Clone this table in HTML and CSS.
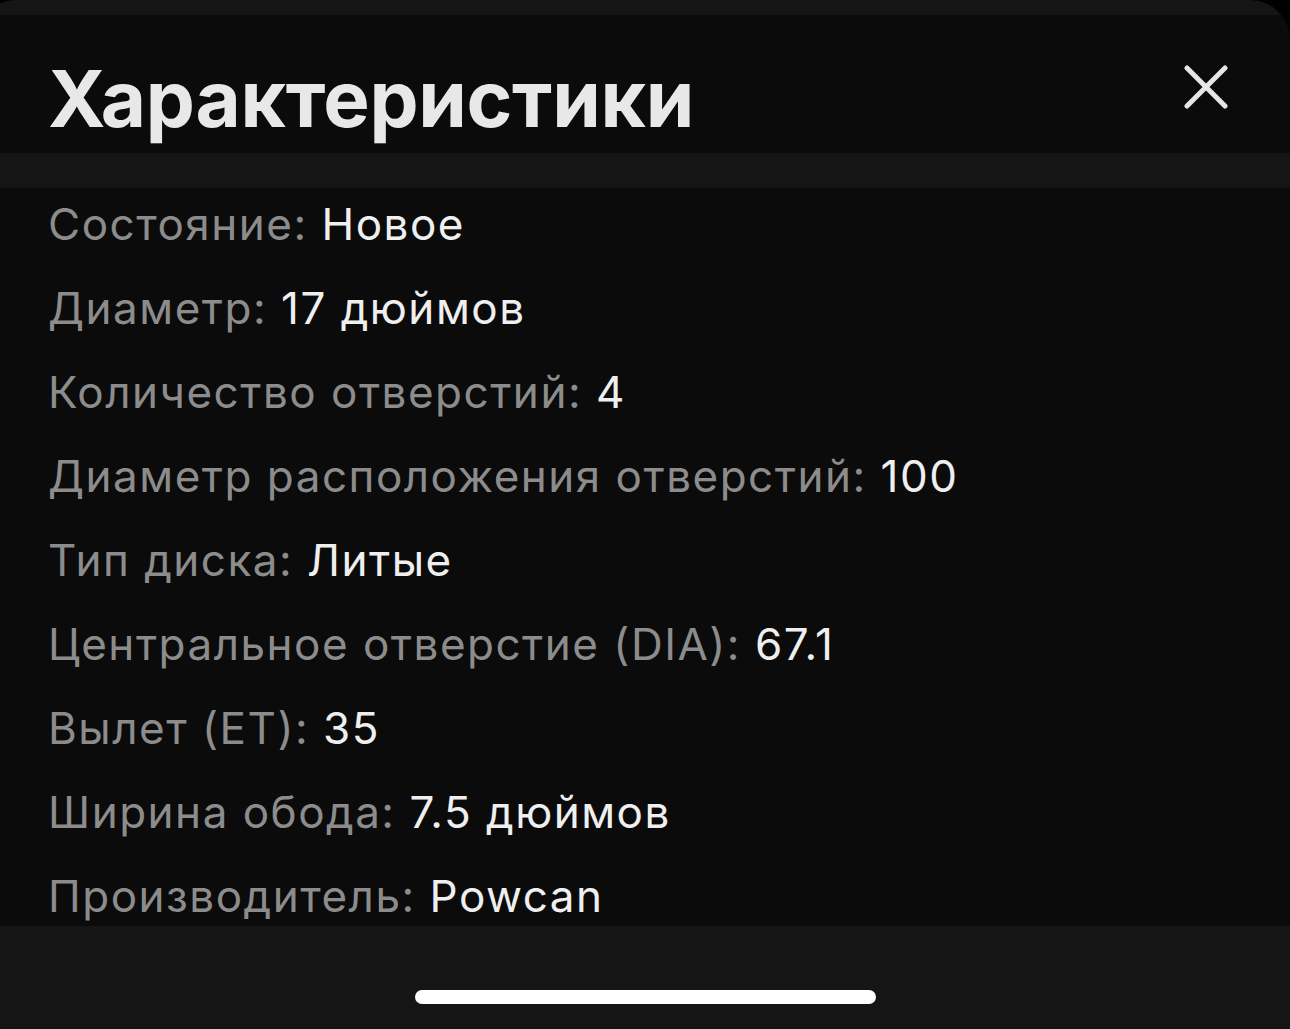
FILE: index.html
```
<!DOCTYPE html>
<html lang="ru">
<head>
<meta charset="utf-8">
<link rel="stylesheet" href="styles.css">
</head>
<body>
<div class="sheet">
  <div class="top-strip"></div>
  <header class="header">
    <h1 class="title">Характеристики</h1>
    <button class="close" aria-label="Закрыть">
      <svg width="44" height="44" viewBox="0 0 44 44"><path d="M3 3 L41 41 M41 3 L3 41" stroke="#e6e6e6" stroke-width="5" stroke-linecap="round" fill="none"/></svg>
    </button>
  </header>
  <div class="divider"></div>
  <div class="content">
    <div class="row"><span class="label">Состояние:</span> <span class="value">Новое</span></div>
    <div class="row"><span class="label">Диаметр:</span> <span class="value">17 дюймов</span></div>
    <div class="row"><span class="label">Количество отверстий:</span> <span class="value">4</span></div>
    <div class="row"><span class="label">Диаметр расположения отверстий:</span> <span class="value">100</span></div>
    <div class="row"><span class="label">Тип диска:</span> <span class="value">Литые</span></div>
    <div class="row"><span class="label">Центральное отверстие (DIA):</span> <span class="value">67.1</span></div>
    <div class="row"><span class="label">Вылет (ET):</span> <span class="value">35</span></div>
    <div class="row"><span class="label">Ширина обода:</span> <span class="value">7.5 дюймов</span></div>
    <div class="row"><span class="label">Производитель:</span> <span class="value">Powcan</span></div>
  </div>
  <div class="bottom">
    <div class="home-indicator"></div>
  </div>
</div>
</body>
</html>
```
FILE: styles.css
```
html, body {
  margin: 0;
  padding: 0;
  background: #000;
  height: 100%;
  overflow: hidden;
}
.sheet {
  width: calc(100% + 24px);
  margin-left: -24px;
  height: 1029px;
  background: #151515;
  border-radius: 40px 40px 0 0;
  display: flex;
  flex-direction: column;
  overflow: hidden;
  font-family: Inter, "Liberation Sans", sans-serif;
}
.top-strip {
  height: 15px;
  flex: none;
}
.header {
  height: 138px;
  flex: none;
  background: #0b0b0b;
  display: flex;
  align-items: flex-start;
  justify-content: space-between;
  padding: 0 62px 0 72px;
  box-sizing: border-box;
}
.title {
  margin: 0;
  font-family: Inter, "Liberation Sans", sans-serif;
  font-weight: 700;
  font-size: 78px;
  line-height: 1;
  color: #e8e8e8;
  padding-top: 45px;
  letter-spacing: -0.3px;
}
.close {
  background: none;
  border: 0;
  padding: 0;
  margin-top: 50px;
  width: 44px;
  height: 44px;
  cursor: pointer;
}
.close svg { display: block; }
.divider {
  height: 35px;
  flex: none;
  background: #151515;
}
.content {
  height: 738px;
  flex: none;
  background: #0b0b0b;
  overflow: hidden;
  padding-left: 72px;
  box-sizing: border-box;
}
.row {
  font-size: 44px;
  line-height: 72px;
  margin-bottom: 12px;
  white-space: nowrap;
  letter-spacing: 1.5px;
}
.label { color: #8c8c8c; }
.value { color: #efefef; }
.bottom {
  flex: 1;
  background: #151515;
  display: flex;
  justify-content: center;
  padding-left: 24px;
  padding-top: 64px;
  box-sizing: border-box;
}
.home-indicator {
  width: 461px;
  height: 14px;
  border-radius: 7px;
  background: #fff;
}
```
